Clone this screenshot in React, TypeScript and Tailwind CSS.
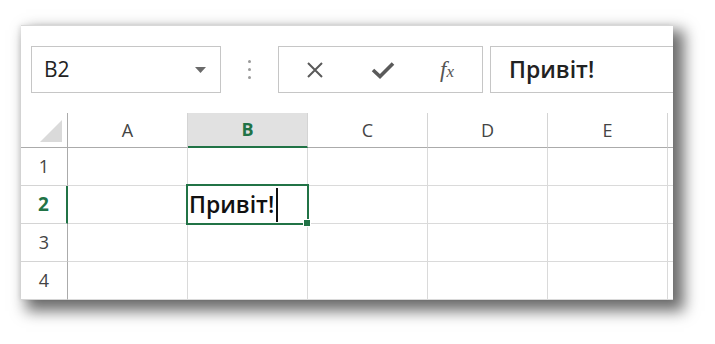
import React from "react";

const cols = ["A", "B", "C", "D", "E"];
const rows = [1, 2, 3, 4];
const font = { fontFamily: '"Open Sans", "Noto Sans", sans-serif' };

export default function App() {
  return (
    <div className="w-[715px] h-[344px] bg-white overflow-hidden" style={font}>
      <div className="ml-[21px] mt-[25px] w-[652px] h-[275px] bg-white border-t border-[#d8d8d8] shadow-[8px_8px_14px_3px_rgba(0,0,0,0.58),-2px_0px_4px_rgba(0,0,0,0.06)] overflow-hidden">
        {/* Formula bar */}
        <div className="flex items-stretch h-[47px] mt-[20px] pl-[10px]">
          <div className="w-[190px] border border-[#c6c6c6] flex items-center justify-between pl-[12px] pr-[14px]">
            <span className="text-[21px] text-[#222]">B2</span>
            <svg width="11" height="6" viewBox="0 0 11 6">
              <path d="M0 0 L11 0 L5.5 6 Z" fill="#6a6a6a" />
            </svg>
          </div>
          <div className="w-[57px] flex flex-col items-center justify-center gap-[5px]">
            <span className="w-[3px] h-[3px] rounded-full bg-[#9a9a9a]" />
            <span className="w-[3px] h-[3px] rounded-full bg-[#9a9a9a]" />
            <span className="w-[3px] h-[3px] rounded-full bg-[#9a9a9a]" />
          </div>
          <div className="w-[205px] border border-[#c6c6c6] flex items-center">
            <div className="w-[72px] flex justify-center">
              <svg width="20" height="20" viewBox="0 0 20 20">
                <path d="M3 3 L17 17 M17 3 L3 17" stroke="#5a5a5a" strokeWidth="2" />
              </svg>
            </div>
            <div className="w-[64px] flex justify-center">
              <svg width="24" height="20" viewBox="0 0 24 20">
                <path d="M2 10 L9 16.5 L22 3.5" stroke="#5a5a5a" strokeWidth="3.6" fill="none" />
              </svg>
            </div>
            <div className="w-[64px] flex justify-center">
              <span className="text-[23px] italic text-[#555] leading-none" style={{ fontFamily: '"Liberation Serif", serif' }}>
                f<span className="text-[17px]">x</span>
              </span>
            </div>
          </div>
          <div className="w-[7px]" />
          <div className="flex-1 border-t border-b border-l border-[#c6c6c6] flex items-center pl-[18px]">
            <span className="text-[23px] font-semibold text-[#222] leading-none">Привіт!</span>
          </div>
        </div>

        {/* Grid */}
        <div className="mt-[20px] grid grid-cols-[47px_120px_120px_120px_120px_120px_20px] grid-rows-[35px_38px_38px_38px_38px]">
          {/* header row */}
          <div className="border-r border-b border-[#ababab] relative">
            <svg className="absolute left-[19px] top-[7px]" width="22" height="22" viewBox="0 0 22 22">
              <path d="M22 0 L22 22 L0 22 Z" fill="#dadada" />
            </svg>
          </div>
          {cols.map((c) => (
            <div
              key={c}
              className={
                c === "B"
                  ? "bg-[#e1e1e1] border-r border-[#d4d4d4] border-b-2 border-b-[#217346] flex items-center justify-center text-[18px] font-bold text-[#217346]"
                  : "border-r border-[#d4d4d4] border-b border-b-[#ababab] flex items-center justify-center text-[18px] text-[#444]"
              }
            >
              {c}
            </div>
          ))}
          <div className="border-b border-[#ababab]" />
          {rows.map((r) => (
            <React.Fragment key={r}>
              <div
                className={
                  r === 2
                    ? "border-r-2 border-r-[#217346] border-b border-b-[#d4d4d4] flex items-center justify-center text-[19px] font-bold text-[#217346]"
                    : "border-r border-r-[#ababab] border-b border-b-[#d4d4d4] flex items-center justify-center text-[18px] text-[#444]"
                }
              >
                {r}
              </div>
              {cols.map((c) => (
                <div key={c} className="border-r border-b border-[#dadada] relative">
                  {r === 2 && c === "B" && (
                    <div className="absolute left-[-2px] top-[-2px] w-[123px] h-[41px] border-2 border-[#217346] z-10 flex items-center pl-[1px]">
                      <span className="text-[23px] font-semibold text-[#111] leading-none">Привіт!</span>
                      <span className="w-[1.5px] h-[34px] bg-[#111] ml-[2px]" />
                      <span className="absolute right-[-4px] bottom-[-4px] w-[6px] h-[6px] bg-[#217346] border border-white box-content" />
                    </div>
                  )}
                </div>
              ))}
              <div className="border-b border-[#dadada]" />
            </React.Fragment>
          ))}
        </div>
      </div>
    </div>
  );
}
